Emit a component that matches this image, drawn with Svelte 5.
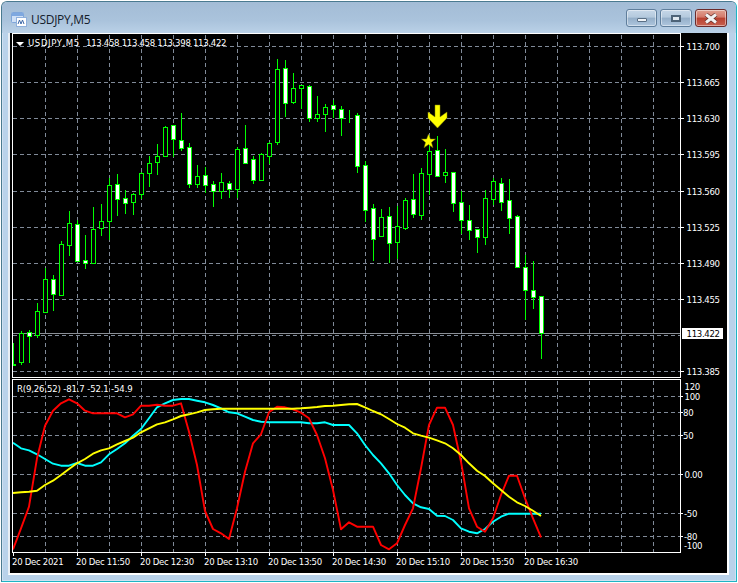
<script>
  const c = [
    [13,343,366,364,366,0],[21,331,365,333,362,0],[29,330,363,332,336,1],[37,303,338,311,335,0],[45,268,312,279,312,0],
    [53,275,311,279,294,1],[61,241,295,244,295,0],[69,211,256,223,245,0],[77,220,261,224,261,1],[85,235,269,260,263,1],
    [93,207,263,229,263,0],[101,204,236,221,228,0],[109,178,240,185,221,0],[117,174,216,184,199,1],[125,190,214,198,203,1],
    [133,193,215,194,202,0],[141,172,199,173,194,0],[149,156,187,163,173,0],[157,144,175,156,162,0],[165,126,156,127,156,0],
    [173,125,157,125,139,1],[181,113,151,140,148,1],[189,143,188,147,184,1],[197,165,188,176,184,0],[205,167,193,175,185,1],
    [213,181,207,184,191,1],[221,173,199,182,191,0],[229,181,198,183,189,1],[237,147,198,149,189,0],[245,125,163,148,163,1],
    [253,156,184,159,180,1],[261,153,180,154,180,0],[269,142,164,143,156,0],[277,59,145,69,142,0],[285,60,117,68,103,1],
    [293,73,104,88,102,0],[301,85,109,85,88,0],[309,85,122,86,118,1],[317,96,122,114,118,0],[325,104,132,107,114,0],
    [333,100,118,105,109,1],[341,106,136,109,118,1],[349,110,123,117,117,0],[357,113,173,115,166,1],[365,161,222,165,210,1],
    [373,204,261,208,239,1],[381,209,237,217,236,0],[389,207,263,216,243,1],[397,206,259,226,242,0],[405,198,230,200,228,0],
    [413,174,218,199,214,1],[421,168,220,173,215,0],[429,136,195,151,174,0],[437,136,177,150,176,1],[445,149,183,172,175,0],
    [453,172,212,172,203,1],[461,191,234,202,220,1],[469,205,240,220,230,1],[477,229,253,229,237,1],[485,190,245,198,237,0],
    [493,178,205,181,199,0],[501,178,211,183,202,1],[509,179,234,200,218,1],[517,215,268,216,267,1],[525,255,320,267,290,1],
    [533,261,309,290,297,1],[541,296,359,296,333,1]
  ];
  const xv = [];
  for (let x = 45; x <= 653; x += 32) xv.push(x);
  const priceGrid = [46,82,118,154,191,227,263,299,335,371];
  const priceLabels = [[46,'113.700'],[82,'113.665'],[118,'113.630'],[154,'113.595'],[191,'113.560'],[227,'113.525'],[263,'113.490'],[299,'113.455'],[371,'113.385']];
  const indGrid = [396,412,435,474,513,536];
  const indLabels = [[386,'120',684.5],[396,'100',684.5],[412,'80',683],[435,'50',683],[474,'0.00',684.5],[513,'-50',684],[536,'-80',684],[545,'-100',684]];
  const timeLabels = [[12,'20 Dec 2021'],[76,'20 Dec 11:50'],[140,'20 Dec 12:30'],[204,'20 Dec 13:10'],[268,'20 Dec 13:50'],[332,'20 Dec 14:30'],[396,'20 Dec 15:10'],[460,'20 Dec 15:50'],[524,'20 Dec 16:30']];
  const timeTicks = [13,77,141,205,269,333,397,461,525];

  const toPts = (a, from) => a.map((v, i) => `${from + 8 * i},${(375 + v / 3).toFixed(1)}`).join(' ');
  const red = toPts([523,460,395,250,152,107,85,73,85,107,115,115,115,115,127,118,92,92,89,92,92,85,170,270,408,462,475,492,400,
    290,205,178,112,95,97,103,113,130,180,250,345,463,442,455,455,455,510,523,505,450,400,280,150,98,98,150,260,400,455,470,
    430,360,302,302,370,430,487], 13);
  const cyan = toPts([203,220,226,238,252,266,272,272,264,272,272,262,238,222,205,182,162,130,97,85,75,72,72,77,82,90,100,112,115,
    125,135,140,142,142,142,142,142,145,145,142,150,150,150,175,210,240,265,295,330,360,385,397,402,422,423,435,460,470,475,462,
    440,425,416,416,416,416,416], 13);
  const yellow = toPts([354,352,350,347,330,317,300,282,265,252,236,226,220,208,198,188,172,160,148,142,133,123,118,112,105,103,101,101,101,
    101,101,101,101,101,101,101,100,98,96,93,92,90,88,87,97,108,118,132,147,158,175,182,188,196,205,220,240,265,287,303,
    325,345,365,382,393,407,423], 13);
</script>

<div class="window">
  <header class="titlebar">
    <svg class="appicon" width="16" height="15" viewBox="0 0 16 15">
      <rect x="0.5" y="0.5" width="12" height="10" rx="1" fill="#cfe0f6" stroke="#7fa6da"/>
      <rect x="1" y="1" width="11" height="3" fill="#7ea8e0"/>
      <rect x="5.5" y="5.5" width="10" height="9" fill="#fff" stroke="#8fb0dc"/>
      <path d="M7 12 L8.5 8 L10 12 L11.5 8 L13 12" fill="none" stroke="#3f6aa8"/>
    </svg>
    <span class="title">USDJPY,M5</span>
    <div class="buttons">
      <button class="btn" aria-label="Minimize"><span class="min"></span></button>
      <button class="btn wide" aria-label="Maximize"><span class="max"></span></button>
      <button class="btn close" aria-label="Close">
        <svg width="16" height="11" viewBox="0 0 16 11"><path d="M3 1.5 L13 9.5 M13 1.5 L3 9.5" stroke="#5e2a24" stroke-width="4.4" fill="none"/><path d="M3 1.5 L13 9.5 M13 1.5 L3 9.5" stroke="#f2f2f2" stroke-width="3" fill="none"/></svg>
      </button>
    </div>
  </header>

  <div class="client">
    <svg class="chart" width="717" height="540" viewBox="10 33 717 540" shape-rendering="crispEdges">
      <rect x="10" y="33" width="717" height="540" fill="#000"/>

      <g class="grid">
        {#each xv as x}<line x1={x + 0.5} x2={x + 0.5} y1="35" y2="377"/>{/each}
        {#each priceGrid as y}<line x1="13" x2="680" y1={y + 0.5} y2={y + 0.5}/>{/each}
      </g>

      <line x1="13" x2="680" y1="333.5" y2="333.5" stroke="#8a8f96"/>

      {#each c as [x, hi, lo, top, bot, fill]}
        <line x1={x + 0.5} x2={x + 0.5} y1={hi} y2={lo} stroke="#00ff00"/>
        {#if x > 13}
          <rect x={x - 2 + 0.5} y={top + 0.5} width="4" height={Math.max(bot - top, 0)} fill={fill ? '#fff' : '#000'} stroke="#00ff00"/>
        {:else}
          <rect x="14" y="364" width="2" height="2" fill="#00ff00"/>
        {/if}
      {/each}

      <g shape-rendering="auto">
        <path d="M435 105 H440 V117 L447 112 V118 L437.5 128 L428 118 V112 L435 117 Z" fill="#ffff00" stroke="#8a8a00" stroke-width="0.5"/>
        <path d="M428.5 134 L430.4 139 L435.5 139 L431.5 142.4 L433 147.8 L428.5 144.6 L424 147.8 L425.5 142.4 L421.5 139 L426.6 139 Z" fill="#ffff00" stroke="#6a6a00" stroke-width="0.5"/>
      </g>

      <g class="grid">
        {#each xv as x}<line x1={x + 0.5} x2={x + 0.5} y1="381" y2="552"/>{/each}
        {#each indGrid as y}<line x1="13" x2="680" y1={y + 0.5} y2={y + 0.5}/>{/each}
      </g>

      <g fill="none" stroke-width="1.9" shape-rendering="auto" stroke-linejoin="round">
        <polyline points={cyan} stroke="#00ffff"/>
        <polyline points={red} stroke="#ff0000"/>
        <polyline points={yellow} stroke="#ffff00"/>
      </g>

      <g fill="none" stroke="#fff">
        <path d="M12.5 34 V377.5 H680.5 V33.5 H12"/>
        <path d="M12.5 552.5 V379.5 H680.5 V552.5 Z"/>
      </g>

      <path d="M16 42 H24 L20 46 Z" fill="#fff" shape-rendering="auto"/>

      <text class="t sym" x="28" y="46">USDJPY,M5</text>
      <text class="t" x="86" y="46">113.458 113.458 113.398 113.422</text>
      <text class="t ind" x="17" y="392">R(9,26,52) -81.7 -52.1 -54.9</text>

      {#each priceLabels as [y, s]}
        <line x1="681" x2="684" y1={y + 0.5} y2={y + 0.5} stroke="#fff"/>
        <text class="t" x="686.5" y={y + 4}>{s}</text>
      {/each}
      <rect x="682" y="328" width="41" height="11" fill="#fff"/>
      <text class="t dark" x="686.5" y="337">113.422</text>

      {#each indLabels as [y, s, x]}
        <text class="t" x={x} y={y + 4}>{s}</text>
      {/each}
      {#each indGrid as y}
        <line x1="681" x2="683" y1={y + 0.5} y2={y + 0.5} stroke="#fff"/>
      {/each}

      {#each timeTicks as x}
        <line x1={x + 0.5} x2={x + 0.5} y1="553" y2="556" stroke="#fff"/>
      {/each}
      {#each timeLabels as [x, s]}
        <text class="t" x={x} y="565">{s}</text>
      {/each}
    </svg>
  </div>
</div>

<style>
  :global(body) { margin: 0; background: #fff; }
  .window {
    box-sizing: border-box;
    width: 736px;
    height: 581px;
    margin: 1px 0 0 1px;
    border: 1px solid #4a7a90;
    border-bottom-color: #1fb4c4;
    border-right-color: #1fb4c4;
    border-radius: 6px 6px 0 0;
    background: #b9d2ea;
    box-shadow: inset 0 0 0 1px rgba(255,255,255,0.35);
    display: flex;
    flex-direction: column;
    overflow: hidden;
  }
  .titlebar {
    height: 31px;
    flex: none;
    display: flex;
    align-items: flex-start;
    padding: 7px 9px 0 9px;
    box-sizing: border-box;
    background: linear-gradient(#a3bcd6 0%, #aac3dc 60%, #bad1e7 100%);
  }
  .appicon { flex: none; margin-top: 3px; }
  .title {
    margin: 3px 0 0 4px;
    font: 12px/16px "Open Sans", "Noto Sans", sans-serif;
    letter-spacing: -0.3px;
    color: #14202c;
    flex: 1;
  }
  .buttons { display: flex; gap: 3px; }
  .btn {
    width: 31px;
    height: 18px;
    padding: 0;
    display: flex;
    align-items: center;
    justify-content: center;
    border: 1px solid #5f7e9c;
    border-radius: 3px;
    background: linear-gradient(#c6d7e8 0%, #b4c9dd 45%, #94aec8 50%, #aec6de 100%);
    box-shadow: inset 0 0 0 1px rgba(255,255,255,0.45);
  }
  .btn.wide { width: 32px; }
  .btn.close {
    width: 32px;
    border-color: #6b2b2b;
    background: linear-gradient(#e0a090 0%, #d4796a 45%, #b8402f 50%, #c8604f 100%);
  }
  .min {
    display: block;
    width: 8px;
    height: 2px;
    margin-top: 3px;
    background: #f0f4f8;
    border: 1px solid #5a6f85;
    border-radius: 1px;
  }
  .max {
    display: block;
    width: 6px;
    height: 3px;
    background: #dfe8f0;
    border: 2px solid #4d6378;
  }
  .client {
    flex: none;
    margin-left: 6px;
    width: 721px;
    background: #fff;
    border-left: 2px solid #e8eef4;
    border-right: 2px solid #fff;
    border-bottom: 2px solid #fff;
    box-sizing: border-box;
  }
  .chart { display: block; }
  .grid line {
    stroke: #808a98;
    stroke-dasharray: 4 3;
  }
  .t {
    font: 9.5px "DejaVu Sans Condensed", "DejaVu Sans", sans-serif;
    letter-spacing: -0.3px;
    fill: #fff;
    shape-rendering: auto;
  }
  .t.sym { letter-spacing: 0.6px; }
  .t.ind { letter-spacing: -0.15px; }
  .dark { fill: #000; }
</style>
